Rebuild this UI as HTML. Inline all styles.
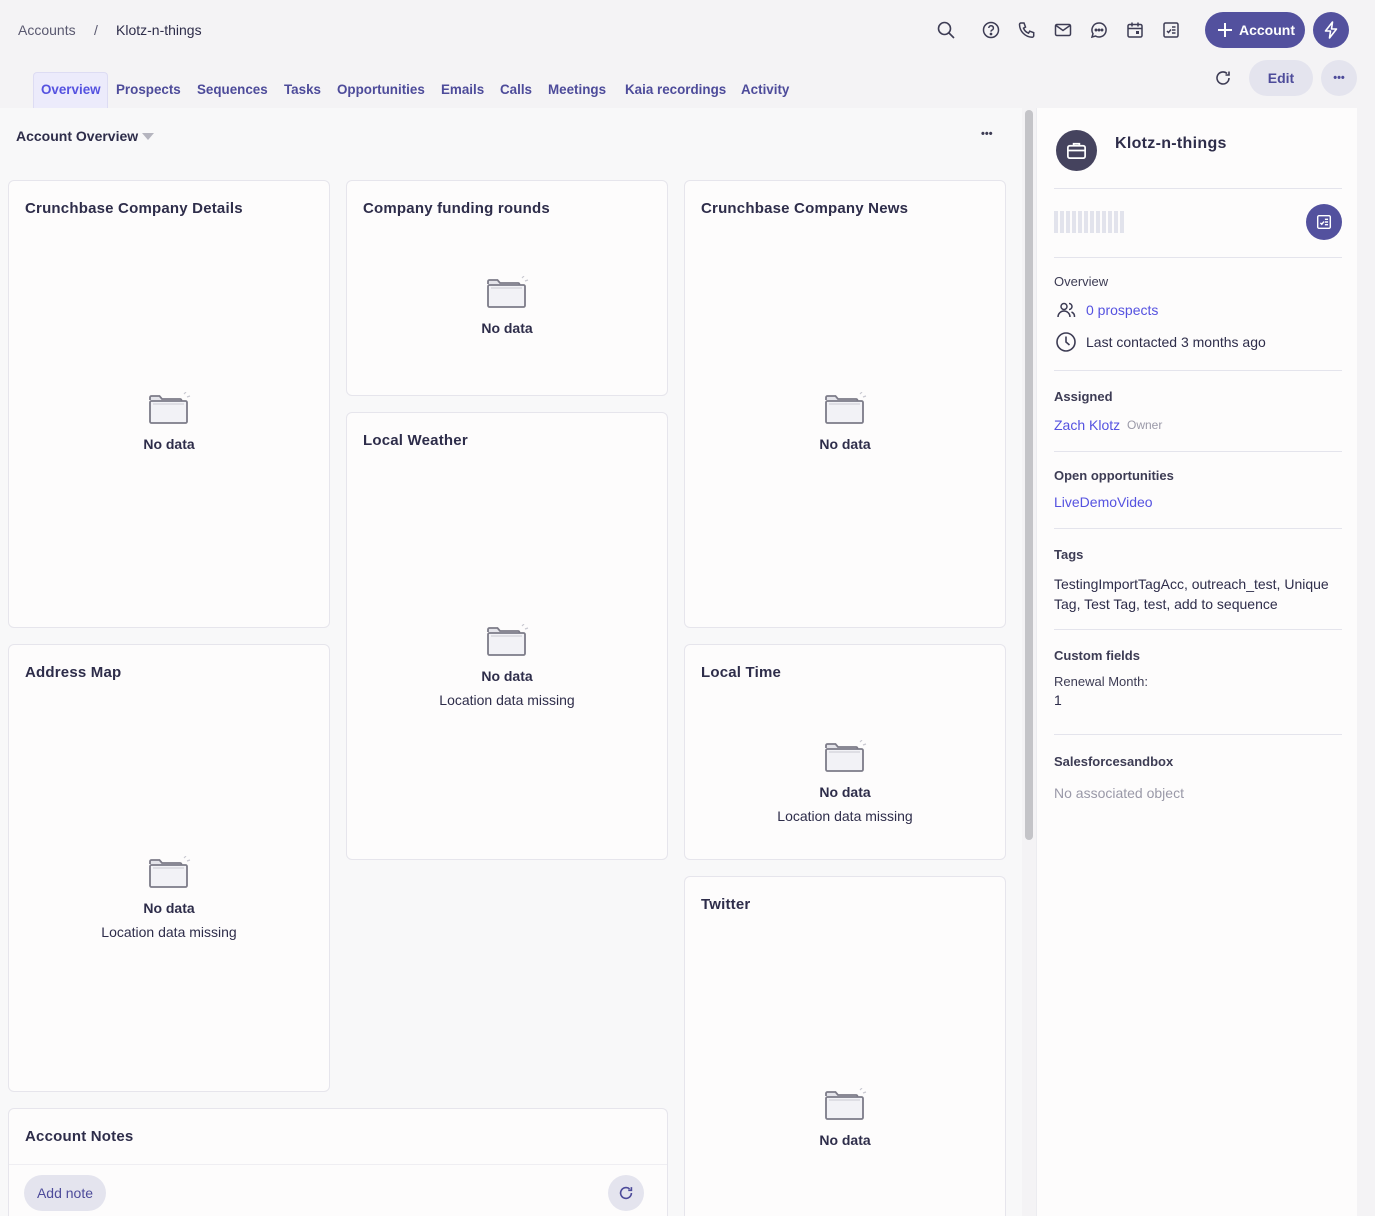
<!DOCTYPE html>
<html style="height:1216px;overflow:hidden"><head><meta charset="utf-8"><style>
*{box-sizing:border-box;margin:0;padding:0}
body{width:1375px;height:1216px;overflow:hidden;background:#f4f3f5;font-family:"Liberation Sans",sans-serif;color:#2e2d4a;position:relative}
.a{position:absolute}
.t{font-size:14px}
.nav{position:absolute;top:82px;font-size:13.4px;color:#4d4b9a;font-weight:bold}
.card{position:absolute;background:#fdfcfc;border:1px solid #e6e5ec;border-radius:6px}
.card h3{position:absolute;left:16px;top:19px;font-size:15px;font-weight:bold;color:#2e2d4a;letter-spacing:.2px}
.nd{position:absolute;width:200px;text-align:center;font-size:14px;font-weight:bold;color:#2e2d4a}
.nd2{position:absolute;width:200px;text-align:center;font-size:14px;color:#2e2d4a}
.fold{position:absolute;width:46px;height:36px}
.ico{position:absolute;top:20px}
.rp .lbl{position:absolute;left:17px;font-size:13px;color:#3d3c54;font-weight:bold}
.hr{position:absolute;left:17px;width:288px;height:1px;background:#e4e4ec}
</style></head><body>
<div class="a t" style="left:18px;top:22px;color:#5a5970;font-size:14px">Accounts</div>
<div class="a t" style="left:94px;top:22px;color:#5a5970">/</div>
<div class="a t" style="left:116px;top:22px;color:#2e2d4a">Klotz-n-things</div>

<svg class="ico" style="left:936px" width="20" height="20" viewBox="0 0 20 20" fill="none" stroke="#3d3c54" stroke-width="1.6"><circle cx="8.5" cy="8.5" r="6"/><path d="M13 13l5 5"/></svg>
<svg class="ico" style="left:981px" width="20" height="20" viewBox="0 0 20 20" fill="none" stroke="#3d3c54" stroke-width="1.5"><circle cx="10" cy="10" r="7.5"/><path d="M7.8 8a2.3 2.3 0 1 1 3 2.2c-.6.3-.8.7-.8 1.4"/><circle cx="10" cy="14" r=".6" fill="#3d3c54"/></svg>
<svg class="ico" style="left:1017px" width="20" height="20" viewBox="0 0 20 20" fill="none" stroke="#3d3c54" stroke-width="1.5"><path d="M4 3h3l1.5 4-2 1.2a9 9 0 0 0 5 5l1.2-2 4 1.5v3a1.5 1.5 0 0 1-1.5 1.5A13 13 0 0 1 2.5 4.5 1.5 1.5 0 0 1 4 3z"/></svg>
<svg class="ico" style="left:1053px" width="20" height="20" viewBox="0 0 20 20" fill="none" stroke="#3d3c54" stroke-width="1.5"><rect x="2.5" y="4.5" width="15" height="11" rx="1.5"/><path d="M3 5.5l7 5 7-5"/></svg>
<svg class="ico" style="left:1089px" width="20" height="20" viewBox="0 0 20 20" fill="none" stroke="#3d3c54" stroke-width="1.5"><path d="M10 3a7 7 0 1 1-3.5 13L3 17l1-3.3A7 7 0 0 1 10 3z"/><circle cx="7" cy="10" r=".7" fill="#3d3c54"/><circle cx="10" cy="10" r=".7" fill="#3d3c54"/><circle cx="13" cy="10" r=".7" fill="#3d3c54"/></svg>
<svg class="ico" style="left:1125px" width="20" height="20" viewBox="0 0 20 20" fill="none" stroke="#3d3c54" stroke-width="1.5"><rect x="3" y="4.5" width="14" height="12.5" rx="1.5"/><path d="M3 8.5h14M7 2.5v4M13 2.5v4"/><rect x="11" y="11" width="3" height="3" fill="#3d3c54" stroke="none"/></svg>
<svg class="ico" style="left:1161px" width="20" height="20" viewBox="0 0 20 20" fill="none" stroke="#3d3c54" stroke-width="1.5"><rect x="3" y="3" width="14" height="14" rx="1.5"/><path d="M6 11l1.5 1.5L10 9.5M11 7h3.5M11 10h3.5M11 13h3.5"/></svg>

<div class="a" style="left:1205px;top:12px;width:100px;height:36px;border-radius:18px;background:#53519e;color:#fff;font-size:14px;font-weight:bold;line-height:36px;padding-left:34px">Account</div>
<svg class="a" style="left:1217px;top:22px" width="16" height="16" viewBox="0 0 16 16" stroke="#fff" stroke-width="2"><path d="M8 1v14M1 8h14"/></svg>
<div class="a" style="left:1313px;top:12px;width:36px;height:36px;border-radius:18px;background:#53519e"></div>
<svg class="a" style="left:1321px;top:20px" width="20" height="20" viewBox="0 0 20 20" fill="none" stroke="#fff" stroke-width="1.6" stroke-linejoin="round"><path d="M11.5 2L4.5 11h5l-1 7 7-9h-5z"/></svg>

<svg class="a" style="left:1213px;top:68px" width="20" height="20" viewBox="0 0 20 20" fill="none" stroke="#3d3c54" stroke-width="1.6"><path d="M16 10a6 6 0 1 1-2-4.5M16 3.5V7h-3.5"/></svg>
<div class="a" style="left:1249px;top:60px;width:64px;height:36px;border-radius:18px;background:#e4e4ee;color:#4d4b9a;font-size:14px;font-weight:bold;text-align:center;line-height:36px">Edit</div>
<div class="a" style="left:1321px;top:60px;width:36px;height:36px;border-radius:18px;background:#e4e4ee;color:#4d4b9a;font-size:11px;font-weight:bold;text-align:center;line-height:36px">•••</div>

<div class="a" style="left:33px;top:72px;width:75px;height:38px;background:#ecebfb;border:1px solid #dddcf3;border-bottom:none;border-radius:4px 4px 0 0"></div>
<div class="nav" style="left:41px;color:#5552e0">Overview</div>
<div class="nav" style="left:116px">Prospects</div>
<div class="nav" style="left:197px">Sequences</div>
<div class="nav" style="left:284px">Tasks</div>
<div class="nav" style="left:337px">Opportunities</div>
<div class="nav" style="left:441px">Emails</div>
<div class="nav" style="left:500px">Calls</div>
<div class="nav" style="left:548px">Meetings</div>
<div class="nav" style="left:625px">Kaia recordings</div>
<div class="nav" style="left:741px">Activity</div>

<div class="a" style="left:0;top:108px;width:1022px;height:1108px;background:#f8f8f9"></div>
<div class="a" style="left:16px;top:128px;font-size:14px;font-weight:bold;color:#2e2d4a">Account Overview</div>
<div class="a" style="left:142px;top:133px;width:0;height:0;border-left:6px solid transparent;border-right:6px solid transparent;border-top:7px solid #b5b5bf"></div>
<div class="a" style="left:981px;top:128px;font-size:11px;color:#3d3c54;font-weight:bold">•••</div>
<div class="a" style="left:1025px;top:110px;width:8px;height:730px;border-radius:4px;background:#c4c4c8"></div>

<div class="card" style="left:8px;top:180px;width:322px;height:448px"><h3>Crunchbase Company Details</h3></div>
<div class="card" style="left:346px;top:180px;width:322px;height:216px"><h3>Company funding rounds</h3></div>
<div class="card" style="left:346px;top:412px;width:322px;height:448px"><h3>Local Weather</h3></div>
<div class="card" style="left:684px;top:180px;width:322px;height:448px"><h3>Crunchbase Company News</h3></div>
<div class="card" style="left:8px;top:644px;width:322px;height:448px"><h3>Address Map</h3></div>
<div class="card" style="left:684px;top:644px;width:322px;height:216px"><h3>Local Time</h3></div>
<div class="card" style="left:684px;top:876px;width:322px;height:340px;border-bottom:none;border-radius:6px 6px 0 0"><h3>Twitter</h3></div>
<div class="card" style="left:8px;top:1108px;width:660px;height:108px;border-bottom:none;border-radius:6px 6px 0 0"><h3>Account Notes</h3></div>
<div class="a" style="left:9px;top:1164px;width:658px;height:1px;background:#efeef2"></div>
<div class="a" style="left:24px;top:1175px;width:82px;height:36px;border-radius:18px;background:#e4e4ee;color:#4d4b9a;font-size:14px;text-align:center;line-height:36px">Add note</div>
<div class="a" style="left:608px;top:1175px;width:36px;height:36px;border-radius:18px;background:#e4e4ee"></div>
<svg class="a" style="left:617px;top:1184px" width="18" height="18" viewBox="0 0 20 20" fill="none" stroke="#4d4b9a" stroke-width="1.8"><path d="M16 10a6 6 0 1 1-2-4.5M16 3.5V7h-3.5"/></svg>

<svg width="0" height="0" style="position:absolute"><defs><g id="f"><path d="M3 8V5.5A1.5 1.5 0 0 1 4.5 4h8l2.5 3h18a1.5 1.5 0 0 1 1.5 1.5V12" fill="#e4e4ea" stroke="#7c7b88" stroke-width="1.8"/><rect x="3" y="9" width="37" height="22" rx="1.5" fill="#f2f2f6" stroke="#7c7b88" stroke-width="1.8"/><path d="M6 12h31" stroke="#c9c9d1"/><path d="M37 2l2-2M40 5l3-1" stroke="#c9c9d1" stroke-width="1.2"/></g></defs></svg>
<svg class="fold" style="left:147px;top:392px" viewBox="0 0 46 36"><use href="#f"/></svg><div class="nd" style="left:69px;top:436px">No data</div>
<svg class="fold" style="left:485px;top:276px" viewBox="0 0 46 36"><use href="#f"/></svg><div class="nd" style="left:407px;top:320px">No data</div>
<svg class="fold" style="left:823px;top:392px" viewBox="0 0 46 36"><use href="#f"/></svg><div class="nd" style="left:745px;top:436px">No data</div>
<svg class="fold" style="left:485px;top:624px" viewBox="0 0 46 36"><use href="#f"/></svg><div class="nd" style="left:407px;top:668px">No data</div><div class="nd2" style="left:407px;top:692px">Location data missing</div>
<svg class="fold" style="left:147px;top:856px" viewBox="0 0 46 36"><use href="#f"/></svg><div class="nd" style="left:69px;top:900px">No data</div><div class="nd2" style="left:69px;top:924px">Location data missing</div>
<svg class="fold" style="left:823px;top:740px" viewBox="0 0 46 36"><use href="#f"/></svg><div class="nd" style="left:745px;top:784px">No data</div><div class="nd2" style="left:745px;top:808px">Location data missing</div>
<svg class="fold" style="left:823px;top:1088px" viewBox="0 0 46 36"><use href="#f"/></svg><div class="nd" style="left:745px;top:1132px">No data</div>

<div class="a rp" style="left:1036px;top:108px;width:321px;height:1108px;background:#fdfcfc;border-left:1px solid #ececf0">
<div class="a" style="left:19px;top:22px;width:41px;height:41px;border-radius:50%;background:#45435e"></div>
<svg class="a" style="left:28px;top:31px" width="23" height="23" viewBox="0 0 24 24" fill="none" stroke="#fff" stroke-width="1.8"><rect x="3" y="7" width="18" height="13" rx="2"/><path d="M9 7V5h6v2M3 12h18"/></svg>
<div class="a" style="left:78px;top:27px;font-size:16px;font-weight:bold;color:#2e2d4a;letter-spacing:.3px">Klotz-n-things</div>
<div class="hr" style="top:80px"></div>
<div class="a" style="left:17px;top:103px;width:70px;height:22px;background:repeating-linear-gradient(90deg,#e2e3ec 0 4px,transparent 4px 6px)"></div>
<div class="a" style="left:269px;top:96px;width:36px;height:36px;border-radius:50%;background:#53519e"></div>
<svg class="a" style="left:278px;top:105px" width="18" height="18" viewBox="0 0 20 20" fill="none" stroke="#fff" stroke-width="1.6"><rect x="3" y="3" width="14" height="14" rx="1.5"/><path d="M6 11l1.5 1.5L10 9.5M11 7h3.5M11 10h3.5M11 13h3.5"/></svg>
<div class="hr" style="top:149px"></div>
<div class="lbl" style="top:166px;font-weight:normal;color:#3d3c54">Overview</div>
<svg class="a" style="left:19px;top:192px" width="20" height="20" viewBox="0 0 20 20" fill="none" stroke="#3d3c54" stroke-width="1.5"><circle cx="8" cy="6.5" r="3"/><path d="M2 17a6 6 0 0 1 12 0M13 3.5a3 3 0 0 1 0 6M15.5 12a5 5 0 0 1 3 5"/></svg>
<div class="a t" style="left:49px;top:194px;color:#5552e0">0 prospects</div>
<svg class="a" style="left:18px;top:223px" width="22" height="22" viewBox="0 0 22 22" fill="none" stroke="#3d3c54" stroke-width="1.6"><circle cx="11" cy="11" r="9"/><path d="M11 5.5V11l3.5 3"/></svg>
<div class="a t" style="left:49px;top:226px">Last contacted 3 months ago</div>
<div class="hr" style="top:262px"></div>
<div class="lbl" style="top:281px">Assigned</div>
<div class="a t" style="left:17px;top:309px;color:#5552e0">Zach Klotz</div>
<div class="a" style="left:90px;top:310px;font-size:12px;color:#9a99a8">Owner</div>
<div class="hr" style="top:343px"></div>
<div class="lbl" style="top:360px">Open opportunities</div>
<div class="a t" style="left:17px;top:386px;color:#5552e0">LiveDemoVideo</div>
<div class="hr" style="top:420px"></div>
<div class="lbl" style="top:439px">Tags</div>
<div class="a t" style="left:17px;top:466px;width:290px;line-height:20px">TestingImportTagAcc, outreach_test, Unique Tag, Test Tag, test, add to sequence</div>
<div class="hr" style="top:521px"></div>
<div class="lbl" style="top:540px">Custom fields</div>
<div class="a" style="left:17px;top:566px;font-size:13px;color:#3d3c54">Renewal Month:</div>
<div class="a t" style="left:17px;top:584px">1</div>
<div class="hr" style="top:626px"></div>
<div class="lbl" style="top:646px">Salesforcesandbox</div>
<div class="a t" style="left:17px;top:677px;color:#9a99a8">No associated object</div>
</div>
</body></html>
